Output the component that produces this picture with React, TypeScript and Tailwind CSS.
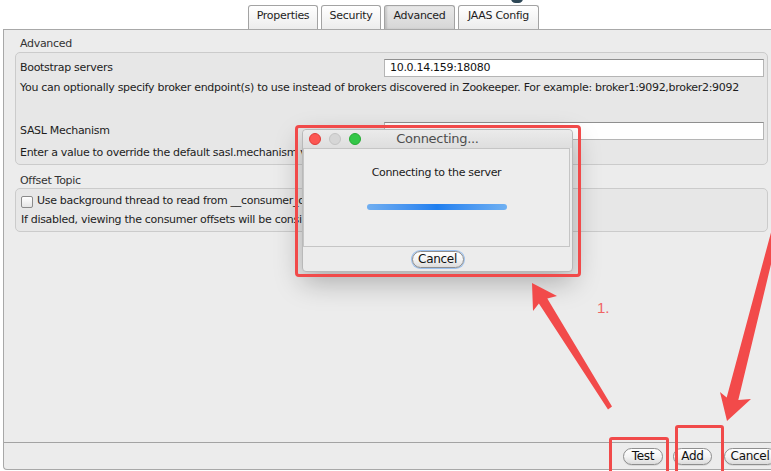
import React from 'react'

// Kafka tool "Add cluster" → Advanced tab, with a modal "Connecting..." sheet
// and red annotation marks drawn over the screenshot.

const tabs = [
  { label: 'Properties', w: 'w-[70px]', active: false },
  { label: 'Security', w: 'w-[60px]', active: false },
  { label: 'Advanced', w: 'w-[71px]', active: true },
  { label: 'JAAS Config', w: 'w-[81px]', active: false },
]

function AquaButton({ label, className = '' }: { label: string; className?: string }) {
  return (
    <div
      className={`h-[17px] flex items-center justify-center rounded-full border border-[#8e8e8e] bg-gradient-to-b from-white via-[#f4f4f4] to-[#dcdcdc] text-[12px] text-[#111] shadow-[0_1px_0_rgba(0,0,0,0.08)] ${className}`}
    >
      {label}
    </div>
  )
}

function TextInput({ value }: { value?: string }) {
  return (
    <div className="w-[380px] h-[18px] flex items-center pl-[5px] bg-white border border-[#b5b5b5] border-t-[#8f8f8f] text-[11px] text-[#111]">
      {value}
    </div>
  )
}

export default function App() {
  return (
    <div className="relative w-[771px] h-[471px] overflow-hidden bg-white font-['DejaVu_Sans',sans-serif] text-[11px] tracking-[-0.3px] text-[#1d1d1d]">

      {/* ── Tab strip ─────────────────────────────────────────────── */}
      <div className="flex h-[29px] items-end pl-[248px] gap-[3px]">
        {tabs.map((t) => (
          <div
            key={t.label}
            className={`${t.w} h-[24px] flex items-start justify-center pt-[2px] border border-b-0 border-[#a3a3a3] rounded-t-[3px] ${
              t.active
                ? 'bg-gradient-to-b from-[#e9e9e9] to-[#d6d6d6] shadow-[inset_2px_0_2px_rgba(0,0,0,0.12)]'
                : 'bg-gradient-to-b from-white to-[#ececec]'
            }`}
          >
            {t.label}
          </div>
        ))}
      </div>

      {/* ── Main panel ────────────────────────────────────────────── */}
      <div className="ml-[3px] h-[441px] flex flex-col border-l border-t border-b border-[#a8a8a8] bg-[#ececec] rounded-bl-[4px]">
        <div className="flex-1 pt-[7px]">

          {/* Advanced group */}
          <div className="ml-[16px] h-[14px] leading-[14px] text-[#333]">Advanced</div>
          <div className="ml-[11px] mt-px w-[753px] h-[113px] pt-[6px] pl-[4px] pr-[3px] bg-[#e7e7e7] border border-[#cbcbcb] rounded-[5px]">
            <div className="flex items-center justify-between h-[18px]">
              <span>Bootstrap servers</span>
              <TextInput value="10.0.14.159:18080" />
            </div>
            <div className="mt-[4px] h-[14px] leading-[14px] whitespace-nowrap">
              You can optionally specify broker endpoint(s) to use instead of brokers discovered in Zookeeper. For example: broker1:9092,broker2:9092
            </div>
            <div className="mt-[27px] flex items-center justify-between h-[18px]">
              <span>SASL Mechanism</span>
              <TextInput />
            </div>
            <div className="mt-[6px] h-[14px] leading-[14px] whitespace-nowrap">
              Enter a value to override the default sasl.mechanism value (GSSAPI)
            </div>
          </div>

          {/* Offset Topic group */}
          <div className="ml-[16px] mt-[9px] h-[14px] leading-[14px] text-[#333]">Offset Topic</div>
          <div className="ml-[11px] w-[753px] h-[44px] pt-[6px] pl-[5px] bg-[#e7e7e7] border border-[#cbcbcb] rounded-[5px]">
            <div className="flex items-center gap-[4px] h-[13px]">
              <span className="w-[12px] h-[12px] rounded-[2px] border border-[#8a8a8a] bg-gradient-to-b from-white to-[#e4e4e4]" />
              <span className="whitespace-nowrap">Use background thread to read from __consumer_offsets topic</span>
            </div>
            <div className="mt-[5px] h-[14px] leading-[14px] whitespace-nowrap">
              If disabled, viewing the consumer offsets will be considerably slower
            </div>
          </div>
        </div>

        {/* Button bar */}
        <div className="h-[27px] flex items-center justify-end border-t border-[#a3a3a3] -mr-[5px]">
          <AquaButton label="Test" className="w-[40px]" />
          <AquaButton label="Add" className="w-[39px] ml-[10px]" />
          <AquaButton label="Cancel" className="w-[52px] ml-[12px]" />
        </div>
      </div>

      {/* small dark shape peeking in at the top */}
      <div className="absolute left-[511px] top-[-6px] w-[12px] h-[9px] rounded-full bg-[#2d4756]" />

      {/* ── Modal "Connecting..." sheet ───────────────────────────── */}
      <div className="absolute left-[302px] top-[129px] w-[271px] h-[143px] flex flex-col bg-[#ececec] rounded-[4px] border border-[#b9b9b9] shadow-[0_10px_28px_rgba(0,0,0,0.28)]">
        <div className="relative h-[18px] flex items-center justify-center bg-gradient-to-b from-[#ebebeb] to-[#dedede] rounded-t-[4px]">
          <div className="absolute left-[6px] top-[3px] flex gap-[8px]">
            <span className="w-[12px] h-[12px] rounded-full bg-[#fc5753] border border-[#df3d39]" />
            <span className="w-[12px] h-[12px] rounded-full bg-[#d6d6d6] border border-[#c4c4c4]" />
            <span className="w-[12px] h-[12px] rounded-full bg-[#33c748] border border-[#27aa35]" />
          </div>
          <span className="text-[13px] text-[#4e4e4e]">Connecting...</span>
        </div>
        <div className="mr-[2px] h-[99px] flex flex-col items-center border border-[#c5c5c5] bg-[#ededed]">
          <div className="mt-[17px] h-[14px] leading-[14px] text-[#1a1a1a]">Connecting to the server</div>
          <div className="mt-[24px] w-[140px] h-[6px] rounded-full bg-gradient-to-r from-[#70aef0] via-[#1f7fef] to-[#6fb0f2]" />
        </div>
        <div className="flex-1 flex items-center justify-center">
          <AquaButton label="Cancel" className="w-[52px] border-[#5a8fd6] ring-1 ring-[#9cc1ef]" />
        </div>
      </div>

      {/* ── Red annotation marks ──────────────────────────────────── */}
      <div className="absolute left-[295px] top-[125px] w-[286px] h-[152px] border-[3px] border-[#f14a4a] rounded-[4px]" />
      <div className="absolute left-[609px] top-[437px] w-[60px] h-[40px] border-[3px] border-[#f14a4a] rounded-[3px]" />
      <div className="absolute left-[675px] top-[425px] w-[49px] h-[52px] border-[3px] border-[#f14a4a] rounded-[3px]" />

      <span className="absolute left-[597px] top-[300px] text-[15px] leading-[16px] tracking-normal text-[#f06464] font-['Liberation_Sans',sans-serif]">
        1.
      </span>

      <svg className="absolute left-0 top-0 pointer-events-none" width="771" height="471" viewBox="0 0 771 471">
        <polygon
          fill="#f24a4a"
          points="532,283 557,296 547.3,298.5 612,406.5 608,409.5 538.9,303.5 533,311"
        />
        <polygon
          fill="#f24a4a"
          points="727,421 720,392 726.7,397.5 773,225 780,227 738.3,400 751,399"
        />
      </svg>
    </div>
  )
}
